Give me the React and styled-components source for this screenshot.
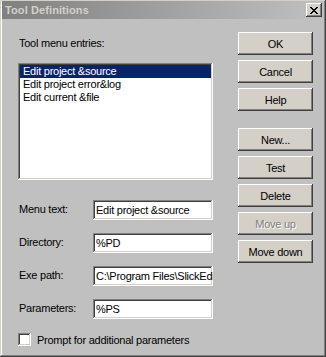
import React from 'react';
import styled, { createGlobalStyle, css } from 'styled-components';

const GlobalStyle = createGlobalStyle`
  html, body {
    margin: 0;
    padding: 0;
    background: #c0c0c0;
  }
  body {
    font-family: "Liberation Sans", Arial, sans-serif;
    font-size: 11px;
    letter-spacing: -0.25px;
    color: #000;
  }
`;

const raised = css`
  box-shadow:
    inset -1px -1px #404040,
    inset 1px 1px #ffffff,
    inset -2px -2px #808080,
    inset 2px 2px #d4d0c8;
`;

const sunken = css`
  box-shadow:
    inset -1px -1px #ffffff,
    inset 1px 1px #808080,
    inset -2px -2px #d4d0c8,
    inset 2px 2px #404040;
`;

const Window = styled.div`
  width: 326px;
  height: 357px;
  box-sizing: border-box;
  padding: 1px 2px 2px 2px;
  background: #c0c0c0;
  display: flex;
  flex-direction: column;
  box-shadow:
    inset -1px -1px #404040,
    inset 1px 1px #d4d0c8,
    inset -2px -2px #808080,
    inset 2px 2px #ffffff;
`;

const TitleBar = styled.div`
  height: 18px;
  display: flex;
  align-items: center;
  justify-content: space-between;
  padding: 0 2px 0 3px;
  background: linear-gradient(to right, #808080, #c0c0c0);
`;

const Title = styled.span`
  color: #d4d0c8;
  font-weight: bold;
  font-size: 11px;
  letter-spacing: 0.1px;
`;

const CloseButton = styled.div`
  width: 16px;
  height: 14px;
  background: #d4d0c8;
  display: flex;
  align-items: center;
  justify-content: center;
  ${raised}
`;

const Body = styled.div`
  flex: 1;
  display: grid;
  grid-template-columns: 195px 75px;
  column-gap: 25px;
  padding: 13px 0 0 16px;
`;

const LeftColumn = styled.div`
  display: flex;
  flex-direction: column;
`;

const Caption = styled.div`
  height: 13px;
  line-height: 13px;
  margin: 5px 0 0 1px;
`;

const ListBox = styled.div`
  margin-top: 13px;
  height: 117px;
  box-sizing: border-box;
  padding: 2px;
  background: #fff;
  ${sunken}
`;

const ListItem = styled.div`
  height: 13px;
  line-height: 13px;
  padding-left: 3px;
  white-space: nowrap;
  background: ${p => (p.selected ? '#0a246a' : 'transparent')};
  color: ${p => (p.selected ? '#fff' : '#000')};
`;

const Fields = styled.div`
  margin-top: 20px;
  display: grid;
  grid-template-columns: 75px 120px;
  row-gap: 13px;
  align-items: center;
`;

const FieldLabel = styled.label`
  padding-left: 1px;
  line-height: 13px;
  margin-top: -2px;
`;

const Input = styled.div`
  height: 20px;
  box-sizing: border-box;
  padding: 0 3px;
  line-height: 20px;
  background: #fff;
  white-space: nowrap;
  overflow: hidden;
  ${sunken}
`;

const CheckRow = styled.div`
  margin-top: 14px;
  display: flex;
  align-items: center;
  gap: 6px;
`;

const CheckBox = styled.span`
  width: 13px;
  height: 13px;
  background: #fff;
  ${sunken}
`;

const ButtonColumn = styled.div`
  display: flex;
  flex-direction: column;
  gap: 5px;
`;

const Button = styled.div`
  height: 23px;
  display: flex;
  align-items: center;
  justify-content: center;
  background: #d4d0c8;
  margin-top: ${p => (p.spaced ? '12px' : '0')};
  color: ${p => (p.disabled ? '#808080' : '#000')};
  text-shadow: ${p => (p.disabled ? '1px 1px #ffffff' : 'none')};
  ${raised}
`;

const CloseIcon = () => (
  <svg width="8" height="7" viewBox="0 0 8 7" shapeRendering="crispEdges">
    <path
      d="M0 0h2v1H0zM6 0h2v1H6zM1 1h2v1H1zM5 1h2v1H5zM2 2h4v1H2zM3 3h2v1H3zM2 4h4v1H2zM1 5h2v1H1zM5 5h2v1H5zM0 6h2v1H0zM6 6h2v1H6z"
      fill="#000"
    />
  </svg>
);

const entries = ['Edit project &source', 'Edit project error&log', 'Edit current &file'];

const fields = [
  ['Menu text:', 'Edit project &source'],
  ['Directory:', '%PD'],
  ['Exe path:', 'C:\\Program Files\\SlickEdit'],
  ['Parameters:', '%PS'],
];

export default function App() {
  return (
    <>
      <GlobalStyle />
      <Window>
        <TitleBar>
          <Title>Tool Definitions</Title>
          <CloseButton>
            <CloseIcon />
          </CloseButton>
        </TitleBar>
        <Body>
          <LeftColumn>
            <Caption>Tool menu entries:</Caption>
            <ListBox>
              {entries.map((e, i) => (
                <ListItem key={e} selected={i === 0}>{e}</ListItem>
              ))}
            </ListBox>
            <Fields>
              {fields.map(([label, value]) => (
                <React.Fragment key={label}>
                  <FieldLabel>{label}</FieldLabel>
                  <Input>{value}</Input>
                </React.Fragment>
              ))}
            </Fields>
            <CheckRow>
              <CheckBox />
              <span>Prompt for additional parameters</span>
            </CheckRow>
          </LeftColumn>
          <ButtonColumn>
            <Button>OK</Button>
            <Button>Cancel</Button>
            <Button>Help</Button>
            <Button spaced>New...</Button>
            <Button>Test</Button>
            <Button>Delete</Button>
            <Button disabled>Move up</Button>
            <Button>Move down</Button>
          </ButtonColumn>
        </Body>
      </Window>
    </>
  );
}
